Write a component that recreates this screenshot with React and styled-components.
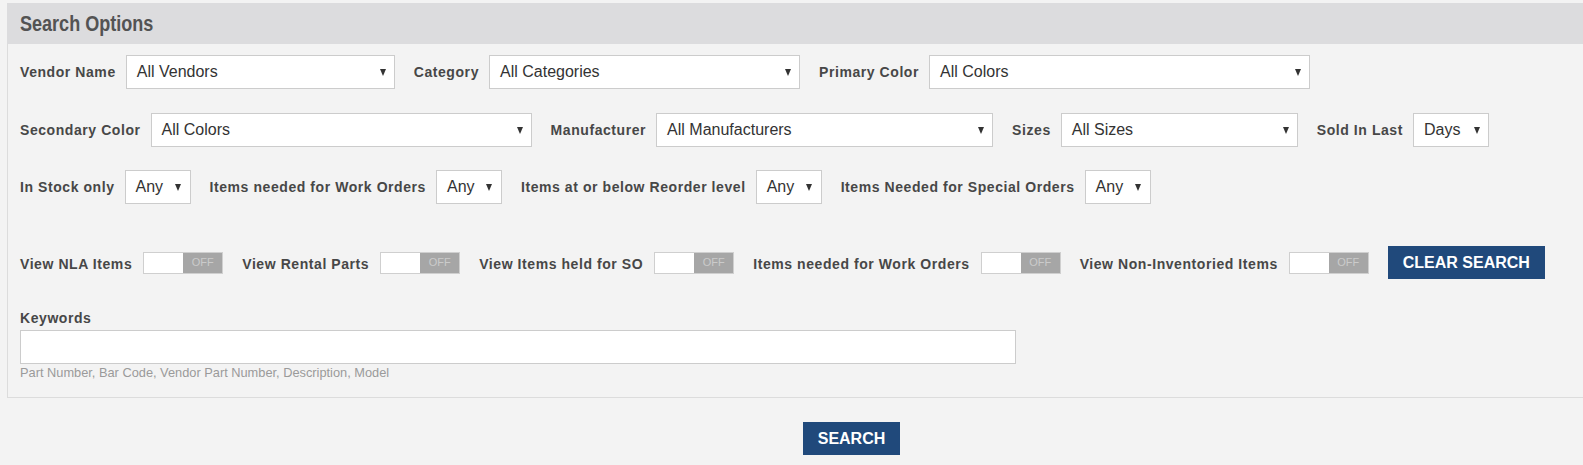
import React from "react";
import styled, { createGlobalStyle } from "styled-components";

const Global = createGlobalStyle`
  html, body { margin: 0; padding: 0; background: #f3f3f3; overflow: hidden; }
  body { font-family: "Liberation Sans", Arial, sans-serif; }
`;

const Page = styled.div`
  width: 1689px;
  padding: 3px 0 0 7px;
`;

const Header = styled.div`
  height: 41px;
  line-height: 41px;
  background: #dcdcde;
  padding-left: 13px;
`;

const Title = styled.span`
  display: inline-block;
  font-family: "Liberation Sans", Arial, sans-serif;
  font-weight: 700;
  font-size: 22px;
  color: #535353;
  transform: scaleX(0.82);
  transform-origin: left center;
`;

const Body = styled.div`
  border-left: 1px solid #dcdcdc;
  border-bottom: 1px solid #dcdcdc;
  padding: 11px 0 16px 12px;
`;

const Row = styled.div`
  display: flex;
  align-items: center;
  gap: 19px;
  margin-bottom: ${(p) => p.$mb || 0}px;
`;

const Field = styled.div`
  display: flex;
  align-items: center;
  gap: ${(p) => p.$gap ?? 10}px;
`;

const Label = styled.span`
  font-size: 14px;
  font-weight: 700;
  letter-spacing: 0.57px;
  color: #474747;
  white-space: nowrap;
  margin-top: ${(p) => p.$mt || 0}px;
`;

const SelectBox = styled.div`
  box-sizing: border-box;
  width: ${(p) => p.$w}px;
  height: 34px;
  border: 1px solid #cccccc;
  background: #fff;
  display: flex;
  align-items: center;
  justify-content: space-between;
  padding: 0 ${(p) => p.$pr ?? 8}px 0 10px;
  font-size: 16px;
  color: #333;
  white-space: nowrap;
`;

const Arrow = styled.span`
  width: 0;
  height: 0;
  border-left: 3.5px solid transparent;
  border-right: 3.5px solid transparent;
  border-top: 7px solid #333;
`;

const Toggle = styled.div`
  box-sizing: border-box;
  width: 80px;
  height: 22px;
  border: 1px solid #cfcfcf;
  background: #fff;
  display: flex;
  justify-content: flex-end;
`;

const ToggleOff = styled.span`
  width: 39px;
  background: #a6a6a6;
  color: #cbcbcb;
  font-size: 11px;
  display: flex;
  align-items: center;
  justify-content: center;
  padding-bottom: 2px;
  box-sizing: border-box;
`;

const Button = styled.button`
  height: 33px;
  padding: 0 15px;
  background: #20497b;
  color: #fff;
  border: none;
  border-radius: 0;
  font-family: "Liberation Sans", Arial, sans-serif;
  font-weight: 700;
  font-size: 16px;
  cursor: pointer;
`;

const KeywordBlock = styled.div`
  display: flex;
  flex-direction: column;
  width: 996px;
`;

const KeywordLabel = styled(Label)`
  line-height: 16px;
  margin-bottom: 4px;
`;

const TextInput = styled.input`
  box-sizing: border-box;
  width: 996px;
  height: 34px;
  border: 1px solid #cccccc;
  background: #fff;
  outline: none;
  font-size: 16px;
  padding: 0 10px;
`;

const Help = styled.span`
  font-size: 12.8px;
  color: #9a9a9a;
  line-height: 16px;
  margin-top: 1px;
`;

const Footer = styled.div`
  display: flex;
  justify-content: center;
  padding-top: 24px;
`;

const Select = ({ w, children, pr }) => (
  <SelectBox $w={w} $pr={pr}>
    <span>{children}</span>
    <Arrow />
  </SelectBox>
);

const Switch = () => (
  <Toggle>
    <ToggleOff>OFF</ToggleOff>
  </Toggle>
);

export default function App() {
  return (
    <>
      <Global />
      <Page>
        <Header>
          <Title>Search Options</Title>
        </Header>
        <Body>
          <Row $mb={24}>
            <Field>
              <Label>Vendor Name</Label>
              <Select w={269}>All Vendors</Select>
            </Field>
            <Field>
              <Label>Category</Label>
              <Select w={311}>All Categories</Select>
            </Field>
            <Field>
              <Label>Primary Color</Label>
              <Select w={381}>All Colors</Select>
            </Field>
          </Row>
          <Row $mb={23}>
            <Field>
              <Label>Secondary Color</Label>
              <Select w={381}>All Colors</Select>
            </Field>
            <Field>
              <Label>Manufacturer</Label>
              <Select w={337}>All Manufacturers</Select>
            </Field>
            <Field>
              <Label>Sizes</Label>
              <Select w={237}>All Sizes</Select>
            </Field>
            <Field>
              <Label>Sold In Last</Label>
              <Select w={76}>Days</Select>
            </Field>
          </Row>
          <Row $mb={42}>
            <Field>
              <Label>In Stock only</Label>
              <Select w={66} pr={9}>Any</Select>
            </Field>
            <Field>
              <Label>Items needed for Work Orders</Label>
              <Select w={66} pr={9}>Any</Select>
            </Field>
            <Field>
              <Label>Items at or below Reorder level</Label>
              <Select w={66} pr={9}>Any</Select>
            </Field>
            <Field>
              <Label>Items Needed for Special Orders</Label>
              <Select w={66} pr={9}>Any</Select>
            </Field>
          </Row>
          <Row $mb={31}>
            <Field $gap={11}>
              <Label $mt={2}>View NLA Items</Label>
              <Switch />
            </Field>
            <Field $gap={11}>
              <Label $mt={2}>View Rental Parts</Label>
              <Switch />
            </Field>
            <Field $gap={11}>
              <Label $mt={2}>View Items held for SO</Label>
              <Switch />
            </Field>
            <Field $gap={11}>
              <Label $mt={2}>Items needed for Work Orders</Label>
              <Switch />
            </Field>
            <Field $gap={11}>
              <Label $mt={2}>View Non-Inventoried Items</Label>
              <Switch />
            </Field>
            <Button>CLEAR SEARCH</Button>
          </Row>
          <KeywordBlock>
            <KeywordLabel>Keywords</KeywordLabel>
            <TextInput type="text" />
            <Help>Part Number, Bar Code, Vendor Part Number, Description, Model</Help>
          </KeywordBlock>
        </Body>
        <Footer>
          <Button>SEARCH</Button>
        </Footer>
      </Page>
    </>
  );
}
